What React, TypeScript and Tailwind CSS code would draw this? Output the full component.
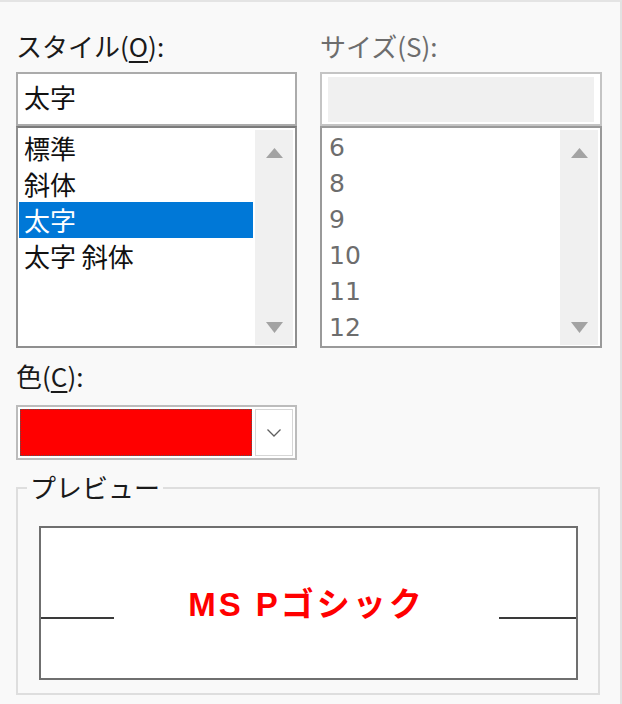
import React from 'react';

const jp = "font-['Noto_Sans_CJK_JP',sans-serif]";

function ArrowUp() {
  return (
    <svg width="17" height="10" viewBox="0 0 17 10">
      <polygon points="8.5,0 17,10 0,10" fill="#a3a3a3" />
    </svg>
  );
}

function ArrowDown() {
  return (
    <svg width="17" height="11" viewBox="0 0 17 11">
      <polygon points="0,0 17,0 8.5,11" fill="#a3a3a3" />
    </svg>
  );
}

// scroll track on the right side of each list
function ScrollBar() {
  return (
    <div className="w-[38px] mt-[2px] mb-[1px] mr-[2px] bg-[#f0f0f0] flex flex-col items-center justify-between pt-[18px] pb-[12px]">
      <ArrowUp />
      <ArrowDown />
    </div>
  );
}

const styles = ['標準', '斜体', '太字', '太字 斜体'];
const sizes = ['6', '8', '9', '10', '11', '12'];

export default function App() {
  return (
    <div
      className={`w-[622px] h-[704px] overflow-hidden bg-[#f9f9f9] border-t-2 border-t-[#e4e4e4] border-r-2 border-r-[#e2e2e2] pl-[16px] text-[26px] leading-[32px] ${jp}`}
    >
      {/* style + size columns */}
      <div className="flex gap-[23px] mt-[28px]">
        <div className="w-[281px] flex flex-col">
          <div className="h-[32px] leading-[32px] mb-[10px] text-[#1a1a1a]">
            スタイル(<span className="underline underline-offset-4 decoration-2">O</span>):
          </div>
          <div className="h-[54px] border-2 border-[#ababab] bg-white flex items-center pl-[6px] pb-[4px]">
            <span className="leading-[32px] text-[#111]">太字</span>
          </div>
          <div className="h-[222px] border-2 border-[#8f8f8f] border-t-[#7a7a7a] bg-white flex">
            <div className="flex-1 pt-[2px] pl-[1px] pr-[2px]">
              {styles.map((s) => (
                <div
                  key={s}
                  className={`h-[36px] leading-[36px] pl-[5px] ${
                    s === '太字' ? 'bg-[#0078d7] text-white' : 'text-[#111]'
                  }`}
                >
                  {s}
                </div>
              ))}
            </div>
            <ScrollBar />
          </div>
        </div>

        <div className="w-[282px] flex flex-col">
          <div className="h-[32px] leading-[32px] mb-[10px] text-[#6d6d6d]">サイズ(S):</div>
          <div className="h-[54px] border-2 border-[#c4c4c4] bg-white px-[6px] pt-[3px] pb-[2px]">
            <div className="h-full bg-[#f0f0f0]" />
          </div>
          <div className="h-[222px] border-2 border-[#9a9a9a] bg-white flex">
            <div className="flex-1 pt-[2px] pl-[7px] overflow-hidden">
              {sizes.map((s) => (
                <div
                  key={s}
                  className="h-[36px] leading-[36px] text-[#6d6d6d] font-['DejaVu_Sans',sans-serif] text-[25px]"
                >
                  {s}
                </div>
              ))}
            </div>
            <ScrollBar />
          </div>
        </div>
      </div>

      {/* colour */}
      <div className="h-[32px] leading-[32px] mt-[12px] mb-[13px] text-[#1a1a1a]">
        色(<span className="underline underline-offset-4 decoration-2">C</span>):
      </div>
      <div className="w-[281px] h-[55px] border-2 border-[#bcbcbc] bg-white p-[2px] flex gap-[3px]">
        <div className="flex-1 bg-[#ff0000] border border-dotted border-[#555]" />
        <div className="w-[38px] border border-[#d6d6d6] bg-white flex items-center justify-center">
          <svg width="14" height="8" viewBox="0 0 14 8">
            <polyline points="0.5,0.5 7,7 13.5,0.5" fill="none" stroke="#5f5f5f" strokeWidth="1.3" />
          </svg>
        </div>
      </div>

      {/* preview */}
      <div className="relative w-[584px] h-[208px] mt-[27px] border-2 border-[#dedede]">
        <span className="absolute -top-[18px] left-[9px] px-[3px] bg-[#f9f9f9] leading-[32px] text-[#1a1a1a]">
          プレビュー
        </span>
        <div className="mt-[37px] ml-[21px] w-[539px] h-[154px] border-2 border-[#6f6f6f] bg-white flex flex-col">
          <div className="mt-[60px] flex items-end">
            <div className="w-[73px] h-[2px] mb-[2px] bg-[#3a3a3a]" />
            <div className="flex-1 text-center font-['Liberation_Sans','Noto_Sans_CJK_JP',sans-serif] font-bold text-[33px] leading-[33px] tracking-[3px] text-[#ff0000]">
              MS Pゴシック
            </div>
            <div className="w-[77px] h-[2px] mb-[2px] bg-[#3a3a3a]" />
          </div>
        </div>
      </div>
    </div>
  );
}
